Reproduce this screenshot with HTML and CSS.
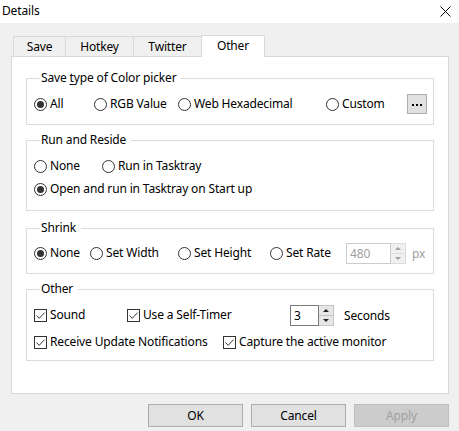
FILE: index.html
```html
<!DOCTYPE html>
<html>
<head>
<meta charset="utf-8">
<link rel="stylesheet" href="styles.css">
</head>
<body>
<div class="window">
  <div class="titlebar">
    <span class="title">Details</span>
    <svg class="close" width="11" height="11" viewBox="0 0 11 11"><path d="M0.5 0.5L10.5 10.5M10.5 0.5L0.5 10.5" stroke="#000" stroke-width="1"/></svg>
  </div>
  <div class="body">
    <div class="tabs">
      <div class="tab t-save">Save</div>
      <div class="tab t-hotkey">Hotkey</div>
      <div class="tab t-twitter">Twitter</div>
      <div class="tab t-other active">Other</div>
    </div>
    <div class="panel">
      <fieldset class="group g1">
        <legend>Save <u>t</u>ype of Color picker</legend>
        <div class="row r-color">
          <label class="opt"><span class="radio on"></span>All</label>
          <label class="opt"><span class="radio"></span>RGB Value</label>
          <label class="opt"><span class="radio"></span>Web Hexadecimal</label>
          <label class="opt"><span class="radio"></span>Custom</label>
          <span class="dots"><svg width="12" height="4" viewBox="0 0 12 4"><rect x="1" y="1" width="2" height="2" fill="#000"/><rect x="5" y="1" width="2" height="2" fill="#000"/><rect x="9" y="1" width="2" height="2" fill="#000"/></svg></span>
        </div>
      </fieldset>
      <fieldset class="group g2">
        <legend>Run and Reside</legend>
        <div class="row r-run">
          <label class="opt"><span class="radio"></span>None</label>
          <label class="opt"><span class="radio"></span>Run in Tasktray</label>
        </div>
        <div class="row r-run2">
          <label class="opt"><span class="radio on"></span>Open and run in Tasktray on Start up</label>
        </div>
      </fieldset>
      <fieldset class="group g3">
        <legend>Shrink</legend>
        <div class="row r-shrink">
          <label class="opt"><span class="radio on"></span>None</label>
          <label class="opt"><span class="radio"></span>Set Width</label>
          <label class="opt"><span class="radio"></span>Set Height</label>
          <label class="opt"><span class="radio"></span>Set Rate</label>
          <span class="spin disabled"><span class="num">480</span><span class="arrows"><span class="up"></span><span class="down"></span></span></span>
          <span class="unit">px</span>
        </div>
      </fieldset>
      <fieldset class="group g4">
        <legend>Other</legend>
        <div class="row r-other">
          <label class="opt"><span class="check"><svg width="11" height="11" viewBox="0 0 11 11"><path d="M1.5 5.5L4.2 8.3L9.6 2.6" fill="none" stroke="#333" stroke-width="1"/></svg></span>Sound</label>
          <label class="opt"><span class="check"><svg width="11" height="11" viewBox="0 0 11 11"><path d="M1.5 5.5L4.2 8.3L9.6 2.6" fill="none" stroke="#333" stroke-width="1"/></svg></span>Use a Self-Timer</label>
          <span class="spin"><span class="num">3</span><span class="arrows"><span class="up"></span><span class="down"></span></span></span>
          <span class="secs">Seconds</span>
        </div>
        <div class="row r-other2">
          <label class="opt"><span class="check"><svg width="11" height="11" viewBox="0 0 11 11"><path d="M1.5 5.5L4.2 8.3L9.6 2.6" fill="none" stroke="#333" stroke-width="1"/></svg></span>Receive Update Notifications</label>
          <label class="opt"><span class="check"><svg width="11" height="11" viewBox="0 0 11 11"><path d="M1.5 5.5L4.2 8.3L9.6 2.6" fill="none" stroke="#333" stroke-width="1"/></svg></span>Capture the active monitor</label>
        </div>
      </fieldset>
    </div>
    <div class="buttons">
      <span class="btn">OK</span>
      <span class="btn">Cancel</span>
      <span class="btn disabled">Apply</span>
    </div>
  </div>
</div>
</body>
</html>
```

FILE: styles.css
```css
* { box-sizing: border-box; }
html, body { margin: 0; padding: 0; }
body {
  width: 459px;
  height: 431px;
  background: #f0f0f0;
  font-family: "Noto Sans", "Liberation Sans", sans-serif;
  font-size: 12px;
  letter-spacing: -0.15px;
  color: #000;
  overflow: hidden;
}
.window { width: 459px; height: 431px; }
.titlebar {
  height: 23px;
  background: #fff;
  display: flex;
  align-items: center;
  justify-content: space-between;
  padding: 0 8px 2px 2px;
}
.title { font-size: 12px; }
.close { display: block; margin-top: 1px; }

.body { padding: 12px 10px 0 11px; }

.tabs { display: flex; align-items: flex-end; height: 21px; padding-left: 2px; position: relative; z-index: 1; }
.tab {
  height: 20px;
  border: 1px solid #d9d9d9;
  border-bottom: none;
  background: #f0f0f0;
  display: flex; align-items: center; justify-content: center;
  margin-right: -1px;
  line-height: 16px;
}
.t-save { width: 53px; }
.t-hotkey { width: 69px; }
.t-twitter { width: 69px; }
.t-other { width: 64px; }
.tab.active { height: 22px; margin-bottom: -1px; background: #fff; padding-bottom: 1px; }

.panel {
  width: 438px;
  height: 338px;
  background: #fff;
  border: 1px solid #d9d9d9;
  padding: 13px 14px 0 14px;
}
.group {
  margin: 0;
  border: 1px solid #dcdcdc;
  padding: 0 6px 9px 7px;
  min-width: 0;
}
.group legend {
  padding: 0 5px 0 1px;
  margin-left: 6px;
  line-height: 16px;
  height: 16px;
}
.group legend u { text-decoration: underline; text-underline-offset: 2px; }
.g2 { margin-top: 7px; padding-bottom: 10px; }
.g3 { margin-top: 9px; }
.g4 { margin-top: 7px; padding-bottom: 7px; }

.row { display: grid; align-items: center; height: 22px; }
.g1 .row, .g2 .r-run, .g4 .r-other { margin-top: 7px; }
.g3 .row { margin-top: 6px; }
.r-run2 { margin-top: 1px; }
.r-other2 { margin-top: 5px; }

.r-color { grid-template-columns: 60px 84px 148px 81px 20px; }
.r-run { grid-template-columns: 68px auto; }
.r-run2 { grid-template-columns: auto; }
.r-shrink { grid-template-columns: 56px 88px 92px 76px 60px auto; }
.r-other { grid-template-columns: 93px 163px 44px auto; }
.r-other2 { grid-template-columns: 189px auto; }

.opt { display: flex; align-items: center; white-space: nowrap; line-height: 16px; }
.radio {
  width: 13px; height: 13px;
  border: 1px solid #333;
  border-radius: 50%;
  margin-right: 3px;
  position: relative;
  flex: none;
}
.radio.on::after {
  content: "";
  position: absolute;
  left: 2px; top: 2px;
  width: 7px; height: 7px;
  border-radius: 50%;
  background: #333;
}
.check {
  width: 13px; height: 13px;
  border: 1px solid #333;
  margin-right: 3px;
  flex: none;
  display: flex;
}
.check svg { display: block; }

.dots {
  width: 20px; height: 20px;
  background: #e1e1e1;
  border: 1px solid #adadad;
  display: flex; align-items: center; justify-content: center;
}
.dots svg { display: block; margin-top: 1px; }

.spin { display: flex; height: 21px; }
.spin .num {
  width: 45px; height: 21px;
  border: 1px solid #7a7a7a;
  padding-left: 3px;
  line-height: 19px;
}
.r-other .spin .num { width: 29px; }
.spin .arrows {
  width: 15px; height: 21px;
  display: flex; flex-direction: column;
  border: 1px solid #c5c5c5;
  border-left: none;
  background: #e6e6e6;
}
.spin .up, .spin .down {
  flex: 1; position: relative;
}
.spin .up { border-bottom: 1px solid #c5c5c5; }
.spin .up::after, .spin .down::after {
  content: ""; position: absolute; left: 4px;
  border-left: 3px solid transparent; border-right: 3px solid transparent;
}
.spin .up::after { top: 3px; border-bottom: 3px solid #222; }
.spin .down::after { top: 3px; border-top: 3px solid #222; }
.spin.disabled .num { border-color: #cccccc; color: #a0a0a0; }
.spin.disabled .arrows { background: #f0f0f0; border-color: #dcdcdc; }
.spin.disabled .up::after { border-bottom-color: #a0a0a0; }
.spin.disabled .down::after { border-top-color: #a0a0a0; }
.spin.disabled .up { border-bottom-color: #dcdcdc; }
.unit { color: #a0a0a0; padding-left: 6px; }
.secs { padding-left: 10px; }

.buttons {
  display: flex; justify-content: flex-end; gap: 8px;
  margin-top: 10px;
  padding-right: 0;
}
.btn {
  width: 95px; height: 23px;
  background: #e1e1e1;
  border: 1px solid #adadad;
  display: flex; align-items: center; justify-content: center;
}
.btn.disabled { background: #cccccc; border-color: #bfbfbf; color: #a0a0a0; }
```
